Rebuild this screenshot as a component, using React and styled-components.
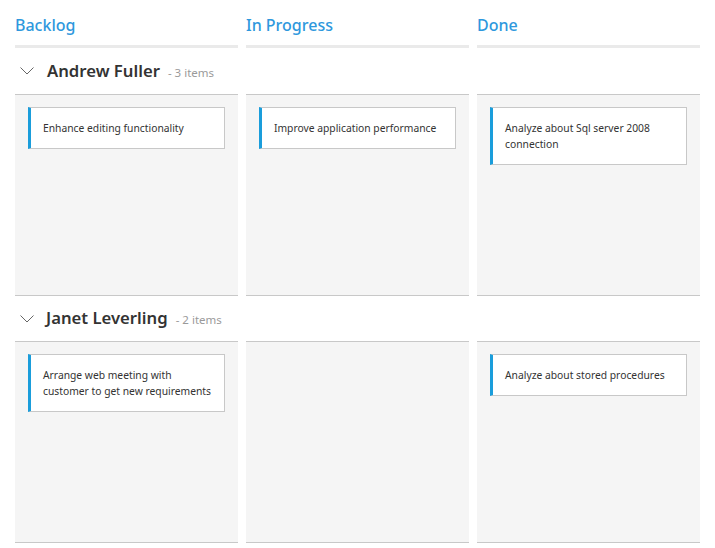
import styled, { createGlobalStyle } from "styled-components";

const GlobalStyle = createGlobalStyle`
  body {
    margin: 0;
    background: #ffffff;
    font-family: "Segoe UI", "Noto Sans", "Open Sans", sans-serif;
    color: #333333;
  }
`;

const Board = styled.div`
  display: grid;
  grid-template-columns: repeat(3, 223px);
  column-gap: 8px;
  padding-left: 15px;
`;

const ColumnHeader = styled.div`
  height: 45px;
  border-bottom: 3px solid #eaeaea;
  display: flex;
  align-items: center;
  font-size: 16px;
  font-weight: 500;
  color: #2e98dd;
`;

const HeaderText = styled.span`
  margin-top: 5px;
`;

const LaneHeader = styled.div`
  height: ${(p) => (p.first ? 46 : 45)}px;
  border-bottom: 1px solid #c8c8c8;
  display: flex;
  align-items: center;
  white-space: nowrap;
`;

const Chevron = styled.svg`
  width: 14px;
  height: 8px;
  margin-left: 5px;
  margin-right: ${(p) => p.gap}px;
  flex-shrink: 0;
`;

const LaneName = styled.span`
  font-size: 16.7px;
  font-weight: 600;
  color: #333333;
  margin-top: -2px;
`;

const LaneCount = styled.span`
  font-size: 11.5px;
  color: #9a9a9a;
  margin-left: 8px;
  margin-top: 2px;
`;

const LaneCell = styled.div`
  height: 201px;
  box-sizing: border-box;
  background: #f5f5f5;
  border-bottom: 1px solid #c8c8c8;
  padding: 12px 13px 0;
  display: flex;
  flex-direction: column;
  gap: 8px;
`;

const Card = styled.div`
  background: #ffffff;
  border: 1px solid #c8c8c8;
  border-left: 3px solid #1a9ddb;
  padding: 12px 6px 12px 12px;
  font-size: 10.3px;
  line-height: 16px;
  color: #333333;
`;

const CardText = styled.div`
  max-width: 170px;
`;

const columns = ["Backlog", "In Progress", "Done"];

const lanes = [
  {
    name: "Andrew Fuller",
    count: "- 3 items",
    gap: 13,
    cards: [
      ["Enhance editing functionality"],
      ["Improve application performance"],
      ["Analyze about Sql server 2008 connection"],
    ],
  },
  {
    name: "Janet Leverling",
    count: "- 2 items",
    gap: 12,
    cards: [
      ["Arrange web meeting with customer to get new requirements"],
      [],
      ["Analyze about stored procedures"],
    ],
  },
];

const App = () => {
  return (
    <>
      <GlobalStyle />
      <Board>
        {columns.map((c) => (
          <ColumnHeader key={c}>
            <HeaderText>{c}</HeaderText>
          </ColumnHeader>
        ))}
        {lanes.map((lane, li) => (
          <>
            <LaneHeader key={lane.name} first={li === 0}>
              <Chevron gap={lane.gap} viewBox="0 0 14 8">
                <path d="M0.5 0.5 L7 7 L13.5 0.5" fill="none" stroke="#666" strokeWidth="1" />
              </Chevron>
              <LaneName>{lane.name}</LaneName>
              <LaneCount>{lane.count}</LaneCount>
            </LaneHeader>
            <LaneHeader first={li === 0} />
            <LaneHeader first={li === 0} />
            {lane.cards.map((list, ci) => (
              <LaneCell key={lane.name + ci}>
                {list.map((t) => (
                  <Card key={t}>
                    <CardText>{t}</CardText>
                  </Card>
                ))}
              </LaneCell>
            ))}
          </>
        ))}
      </Board>
    </>
  );
};

export default App;
